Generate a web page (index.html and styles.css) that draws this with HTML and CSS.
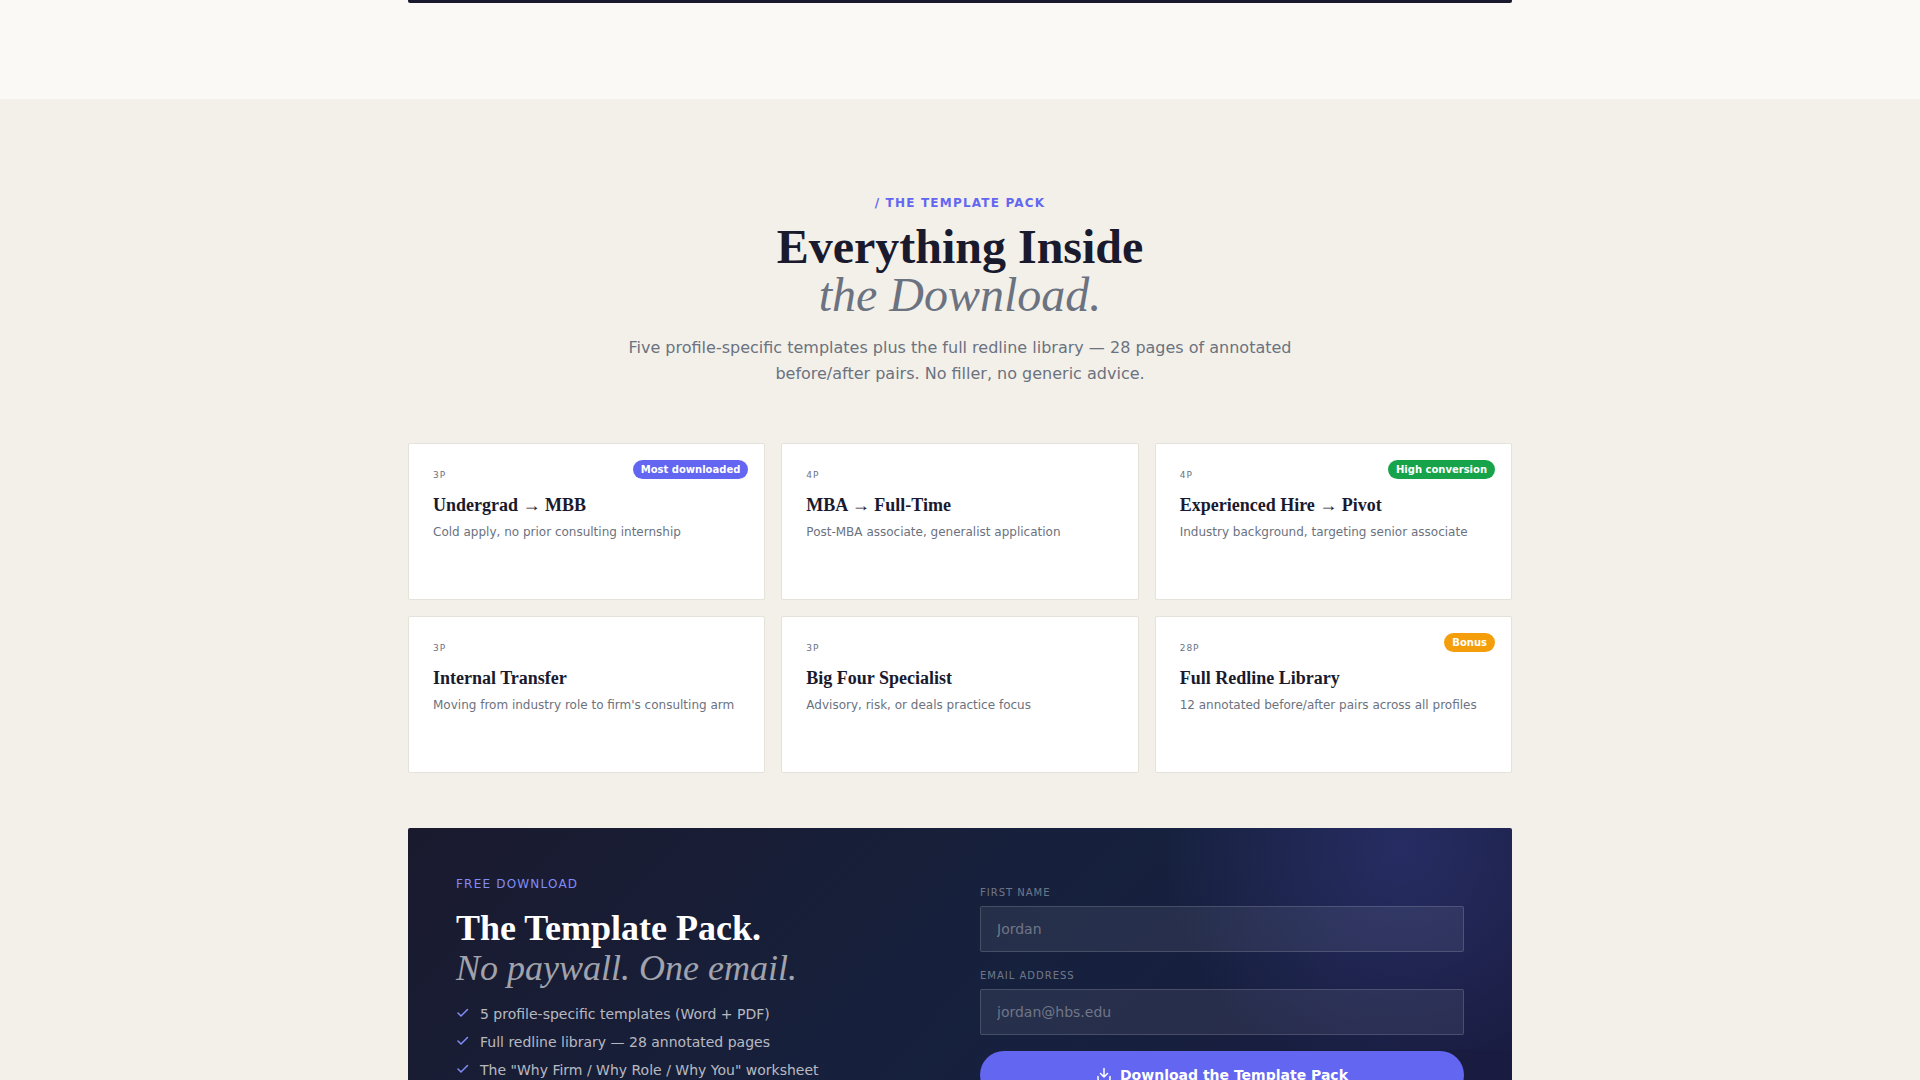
FILE: index.html
```
<!DOCTYPE html>
<html lang="en">
<head>
  <meta charset="UTF-8" />
  <meta name="viewport" content="width=device-width, initial-scale=1.0" />
  <title>The Template Pack</title>
  <link rel="stylesheet" href="styles.css">
</head>
<body>
  <section class="preview">
    <div class="container">
      <div class="preview-panel"></div>
    </div>
  </section>

  <section class="pack">
    <div class="container">
      <header class="section-header">
        <p class="section-label">/ The Template Pack</p>
        <h2>Everything Inside<br><em>the Download.</em></h2>
        <p class="section-sub">Five profile-specific templates plus the full redline library — 28 pages of annotated before/after pairs. No filler, no generic advice.</p>
      </header>

      <div class="template-grid">
        <article class="template-card">
          <span class="badge badge-indigo">Most downloaded</span>
          <p class="pages">3p</p>
          <h3>Undergrad → MBB</h3>
          <p class="desc">Cold apply, no prior consulting internship</p>
        </article>
        <article class="template-card">
          <p class="pages">4p</p>
          <h3>MBA → Full-Time</h3>
          <p class="desc">Post-MBA associate, generalist application</p>
        </article>
        <article class="template-card">
          <span class="badge badge-green">High conversion</span>
          <p class="pages">4p</p>
          <h3>Experienced Hire → Pivot</h3>
          <p class="desc">Industry background, targeting senior associate</p>
        </article>
        <article class="template-card">
          <p class="pages">3p</p>
          <h3>Internal Transfer</h3>
          <p class="desc">Moving from industry role to firm's consulting arm</p>
        </article>
        <article class="template-card">
          <p class="pages">3p</p>
          <h3>Big Four Specialist</h3>
          <p class="desc">Advisory, risk, or deals practice focus</p>
        </article>
        <article class="template-card">
          <span class="badge badge-amber">Bonus</span>
          <p class="pages">28p</p>
          <h3>Full Redline Library</h3>
          <p class="desc">12 annotated before/after pairs across all profiles</p>
        </article>
      </div>

      <div class="download">
        <div class="download-copy">
          <p class="download-label">Free Download</p>
          <h2>The Template Pack.<br><em>No paywall. One email.</em></h2>
          <ul class="download-list">
            <li>
              <svg class="check" viewBox="0 0 14 14" aria-hidden="true"><path d="M2 6l3 3 6.500-6.500" /></svg>
              5 profile-specific templates (Word + PDF)
            </li>
            <li>
              <svg class="check" viewBox="0 0 14 14" aria-hidden="true"><path d="M2 6l3 3 6.500-6.500" /></svg>
              Full redline library — 28 annotated pages
            </li>
            <li>
              <svg class="check" viewBox="0 0 14 14" aria-hidden="true"><path d="M2 6l3 3 6.500-6.500" /></svg>
              The "Why Firm / Why Role / Why You" worksheet
            </li>
          </ul>
        </div>
        <form class="download-form">
          <label for="firstName">First Name</label>
          <input type="text" id="firstName" placeholder="Jordan">
          <label for="email">Email Address</label>
          <input type="email" id="email" placeholder="jordan@hbs.edu">
          <button type="submit">
            <svg class="download-icon" viewBox="0 0 16 16" aria-hidden="true"><path d="M8 1.500v8.500M4.500 6.500L8 10l3.500-3.500M2 9.500V12a2 2 0 0 0 2 2h8a2 2 0 0 0 2-2V9.500" /></svg>
            Download the Template Pack
          </button>
        </form>
      </div>
    </div>
  </section>
</body>
</html>
```
FILE: styles.css
```
* {
  box-sizing: border-box;
  margin: 0;
  padding: 0;
}

body {
  font-family: "DejaVu Sans", sans-serif;
  background: #faf9f5;
  color: #1a1a2e;
}

.container {
  max-width: 1200px;
  margin: 0 auto;
  padding: 0 48px;
}

/* end of the previous section */
.preview {
  padding-bottom: 96px;
}

.preview-panel {
  height: 3px;
  background: #1a1a2e;
  border-radius: 0 0 2px 2px;
}

.pack {
  background: #f3f0e9;
  padding: 96px 0;
}

.section-header {
  max-width: 680px;
  margin: 0 auto 56px;
  text-align: center;
}

.section-label {
  font-size: 12px;
  font-weight: bold;
  line-height: 16px;
  letter-spacing: 0.1em;
  text-transform: uppercase;
  color: #6366f1;
  margin-bottom: 12px;
}

.section-header h2 {
  font-family: "Liberation Serif", serif;
  font-size: 48px;
  line-height: 48px;
  margin-bottom: 16px;
}

.section-header em {
  font-weight: normal;
  color: #6b7280;
}

.section-sub {
  font-size: 16px;
  line-height: 26px;
  color: #6b7280;
}

.template-grid {
  display: grid;
  grid-template-columns: repeat(3, 1fr);
  gap: 16px;
  margin-bottom: 55px;
}

.template-card {
  position: relative;
  min-height: 157px;
  padding: 24px;
  background: #fff;
  border: 1px solid #e5e2da;
  border-radius: 2px;
}

.pages {
  font-size: 9px;
  line-height: 14px;
  letter-spacing: 1px;
  text-transform: uppercase;
  color: #6b7280;
  margin-bottom: 12px;
}

.template-card h3 {
  font-family: "Liberation Serif", serif;
  font-size: 18px;
  line-height: 22px;
  margin-bottom: 6px;
}

.desc {
  font-size: 12px;
  line-height: 20px;
  color: #6b7280;
}

.badge {
  position: absolute;
  top: 16px;
  right: 16px;
  padding: 3px 8px;
  border-radius: 10px;
  font-size: 10px;
  font-weight: bold;
  line-height: 13px;
  color: #fff;
}

.badge-indigo {
  background: #6366f1;
}

.badge-green {
  background: #16a34a;
}

.badge-amber {
  background: #f59e0b;
}

.download {
  display: grid;
  grid-template-columns: 1fr 1fr;
  gap: 40px;
  position: relative;
  overflow: hidden;
  min-height: 400px;
  padding: 48px;
  border-radius: 2px;
  background: linear-gradient(135deg, #1a1a2e 0%, #16213e 50%, #1a1a40 100%);
}

/* soft glow in the top right corner */
.download::before {
  content: "";
  position: absolute;
  top: -178px;
  right: -15%;
  width: 50%;
  height: 400px;
  background: radial-gradient(circle, rgba(99, 102, 241, 0.2) 0%, transparent 70%);
}

.download-copy,
.download-form {
  position: relative;
}

.download-label {
  font-size: 12px;
  line-height: 16px;
  letter-spacing: 0.1em;
  text-transform: uppercase;
  color: #818cf8;
  margin-bottom: 16px;
}

.download h2 {
  font-family: "Liberation Serif", serif;
  font-size: 36px;
  line-height: 40px;
  color: #fff;
  margin-bottom: 16px;
}

.download em {
  font-weight: normal;
  color: rgba(255, 255, 255, 0.6);
}

.download-list {
  display: flex;
  flex-direction: column;
  gap: 8px;
  list-style: none;
}

.download-list li {
  display: flex;
  align-items: center;
  gap: 10px;
  font-size: 14px;
  line-height: 20px;
  color: rgba(255, 255, 255, 0.7);
}

.check {
  width: 14px;
  height: 14px;
  fill: none;
  stroke: #818cf8;
  stroke-width: 1.5;
  stroke-linecap: round;
  stroke-linejoin: round;
}

.download-form {
  padding-top: 9px;
}

.download-form label {
  display: block;
  font-size: 10px;
  line-height: 15px;
  letter-spacing: 0.1em;
  text-transform: uppercase;
  color: rgba(255, 255, 255, 0.4);
  margin-bottom: 6px;
}

.download-form input {
  display: block;
  width: 100%;
  height: 46px;
  padding: 0 16px;
  margin-bottom: 16px;
  font-family: inherit;
  font-size: 14px;
  color: #fff;
  background: rgba(255, 255, 255, 0.07);
  border: 1px solid rgba(255, 255, 255, 0.15);
  border-radius: 2px;
}

.download-form input::placeholder {
  color: rgba(255, 255, 255, 0.35);
}

.download-form button {
  display: flex;
  align-items: center;
  justify-content: center;
  gap: 8px;
  width: 100%;
  height: 48px;
  border: none;
  border-radius: 24px;
  background: #6366f1;
  color: #fff;
  font-family: inherit;
  font-size: 14px;
  font-weight: bold;
  cursor: pointer;
}

.download-icon {
  width: 16px;
  height: 16px;
  fill: none;
  stroke: #fff;
  stroke-width: 1.5;
  stroke-linecap: round;
  stroke-linejoin: round;
}

@media (max-width: 900px) {
  .template-grid,
  .download {
    grid-template-columns: 1fr;
  }

  .download {
    gap: 32px;
  }
}
```
